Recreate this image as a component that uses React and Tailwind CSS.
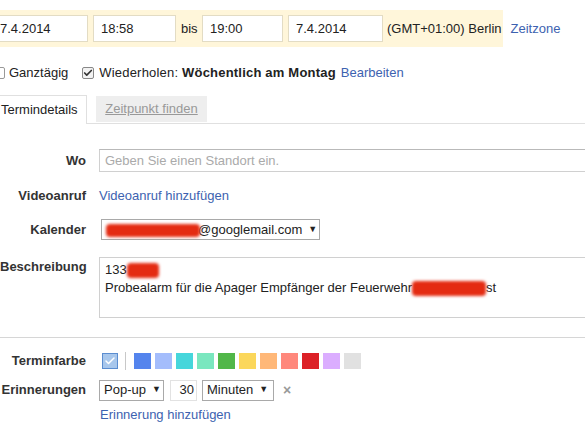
import { Check } from 'lucide-react'

// event colour swatches, left to right
const COLORS = [
  '#5484ed', '#a4bdfc', '#46d6db', '#7ae7bf', '#51b749', '#fbd75b',
  '#ffb878', '#ff887c', '#dc2127', '#dbadff', '#e1e1e1',
]

function Field({ label, top = false, className = '', children }) {
  return (
    <div className={`flex ${top ? 'items-start' : 'items-center'} ${className}`}>
      <div className="w-[86px] shrink-0 text-right font-bold text-[#333] whitespace-nowrap">{label}</div>
      <div className="ml-[13px] flex-1 min-w-0">{children}</div>
    </div>
  )
}

function Select({ children, className = '' }) {
  return (
    <div className={`shrink-0 h-[21px] border border-[#a9a9a9] bg-white flex items-center pl-[4px] pr-[6px] ${className}`}>
      <span className="flex-1 whitespace-nowrap">{children}</span>
      <span className="text-[9px] ml-[6px]">▼</span>
    </div>
  )
}

export default function App() {
  return (
    <div className="w-[585px] h-[425px] overflow-hidden bg-white text-[13px] text-[#222] font-['Liberation_Sans',Arial,sans-serif]">
      {/* date / time strip */}
      <div className="mt-[10px] h-[37px] w-[503px] bg-[#fff6da] flex items-center">
        <div className="shrink-0 ml-[-8px] w-[96px] h-[27px] bg-white border border-[#e3dcc4] pl-[7px] flex items-center">7.4.2014</div>
        <div className="shrink-0 ml-[5px] w-[83px] h-[27px] bg-white border border-[#e3dcc4] pl-[7px] flex items-center">18:58</div>
        <span className="shrink-0 ml-[5px] w-[21px]">bis</span>
        <div className="shrink-0 w-[81px] h-[27px] bg-white border border-[#e3dcc4] pl-[7px] flex items-center">19:00</div>
        <div className="shrink-0 ml-[5px] w-[95px] h-[27px] bg-white border border-[#e3dcc4] pl-[7px] flex items-center">7.4.2014</div>
        <span className="shrink-0 ml-[4px] whitespace-nowrap">(GMT+01:00) Berlin</span>
        <a className="shrink-0 ml-[9px] text-[#3d62b0] whitespace-nowrap">Zeitzone</a>
      </div>

      {/* all-day / repeat */}
      <div className="mt-[18px] h-[16px] flex items-center">
        <span className="ml-[-7px] w-[12px] h-[12px] border border-[#999] bg-white rounded-[2px]" />
        <span className="ml-[4px]">Ganztägig</span>
        <span className="ml-[14px] w-[12px] h-[12px] border border-[#888] bg-[#f2f2f2] rounded-[2px] flex items-center justify-center">
          <Check size={10} strokeWidth={4} className="text-[#333]" />
        </span>
        <span className="ml-[5px] tracking-[0.2px]">Wiederholen: <b>Wöchentlich am Montag</b></span>
        <a className="ml-[5px] text-[#3d62b0]">Bearbeiten</a>
      </div>

      {/* tabs */}
      <div className="mt-[14px] flex items-end h-[29px]">
        <div className="ml-[-6px] h-[29px] w-[93px] border border-b-0 border-[#e0e0e0] bg-white pl-[6px] flex items-center">Termindetails</div>
        <div className="flex-1 h-[29px] border-b border-[#e0e0e0] flex items-end">
          <div className="ml-[9px] h-[26px] w-[111px] bg-[#eeeeee] text-[#999] underline flex items-center justify-center mb-[1px]">Zeitpunkt finden</div>
        </div>
      </div>

      <Field label="Wo" className="mt-[25px]">
        <div className="h-[23px] w-[500px] border border-[#d0d0d0] border-t-[#b9b9b9] pl-[5px] flex items-center text-[#aaa]">
          Geben Sie einen Standort ein.
        </div>
      </Field>

      <Field label="Videoanruf" className="mt-[14px] h-[20px]">
        <a className="text-[#3d62b0]">Videoanruf hinzufügen</a>
      </Field>

      <Field label="Kalender" className="mt-[13px]">
        <Select className="ml-[2px] w-[219px]">
          <span className="inline-block align-middle w-[94px] h-[13px] mr-[-2px] bg-[#e42b12] rounded-[4px] blur-[1.5px]" />
          @googlemail.com
        </Select>
      </Field>

      <Field label="Beschreibung" top className="mt-[17px]">
        <div className="h-[61px] w-[500px] border border-[#d0d0d0] pl-[5px] pt-[3px] leading-[18px]">
          <div>
            133<span className="inline-block align-middle w-[32px] h-[15px] bg-[#e42b12] rounded-[4px] blur-[1.5px]" />
          </div>
          <div className="whitespace-nowrap">
            Probealarm für die Apager Empfänger der Feuerwehr
            <span className="inline-block align-middle w-[74px] h-[15px] bg-[#e42b12] rounded-[4px] blur-[1.5px]" />st
          </div>
        </div>
      </Field>

      <div className="mt-[19px] border-t border-[#d6d6d6]" />

      <Field label="Terminfarbe" className="mt-[13px]">
        <div className="flex items-center">
          <span className="ml-[3px] w-[16px] h-[16px] bg-[#a8c7ec] border border-[#5b8dd0] flex items-center justify-center">
            <Check size={12} strokeWidth={3} className="text-white" />
          </span>
          <span className="ml-[7px] w-px h-[18px] bg-[#c8c8c8]" />
          <div className="ml-[8px] flex gap-[4px]">
            {COLORS.map(c => (
              <span key={c} className="w-[17px] h-[16px]" style={{ background: c }} />
            ))}
          </div>
        </div>
      </Field>

      <Field label="Erinnerungen" className="mt-[9px]">
        <div className="flex items-center">
          <Select className="w-[65px]">Pop-up</Select>
          <div className="shrink-0 ml-[6px] w-[27px] h-[21px] border border-[#e2e2e2] flex items-center justify-end pr-[2px]">30</div>
          <Select className="ml-[5px] w-[72px]">Minuten</Select>
          <span className="ml-[9px] text-[#999] font-bold text-[14px]">×</span>
        </div>
      </Field>

      <Field label="" className="mt-[4px]">
        <a className="ml-[1px] text-[#3d62b0]">Erinnerung hinzufügen</a>
      </Field>
    </div>
  )
}
